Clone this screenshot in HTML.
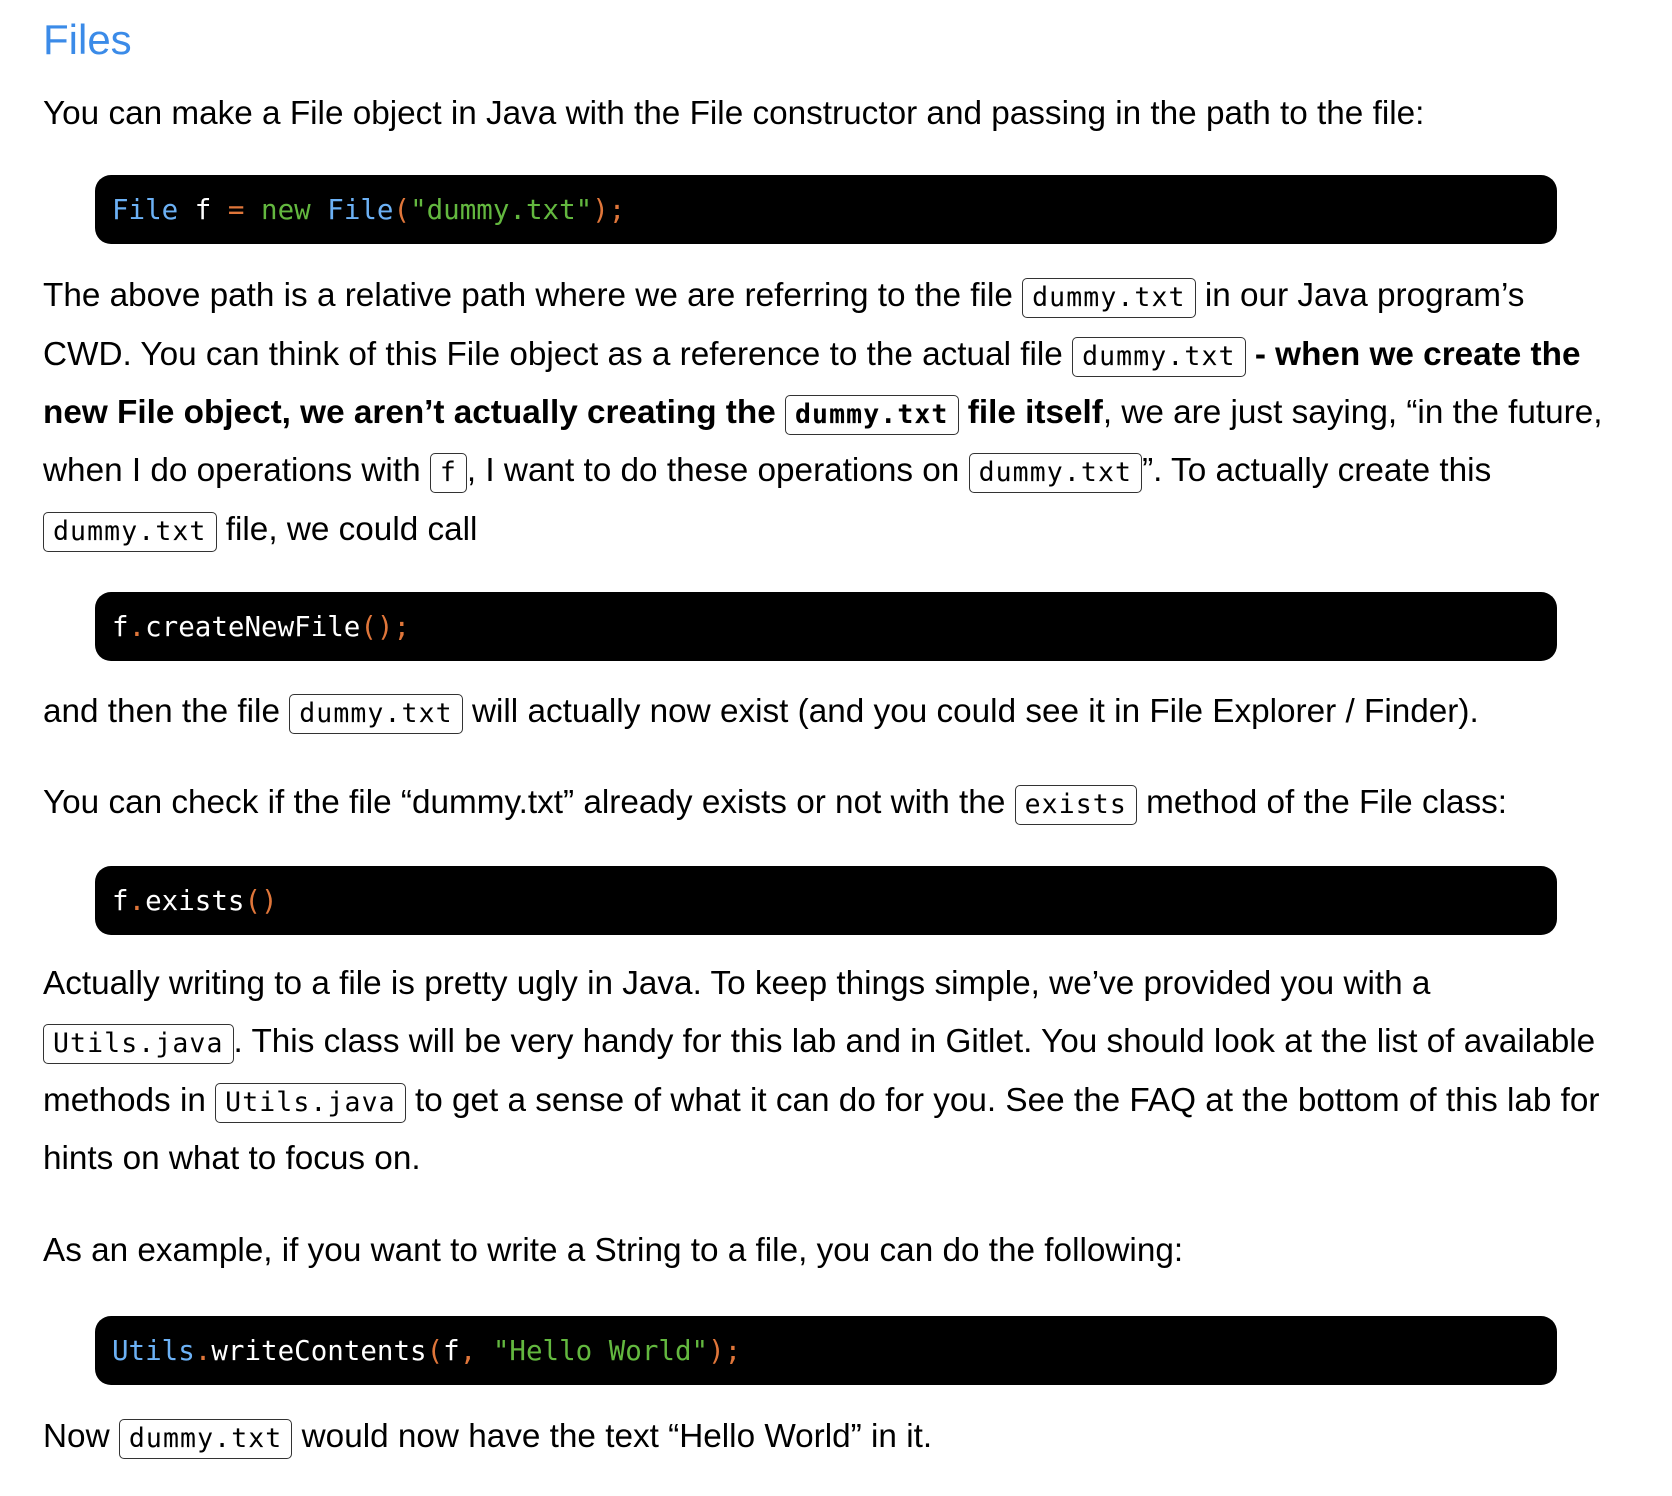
<!DOCTYPE html>
<html><head><meta charset="utf-8"><style>
html,body{margin:0;padding:0;background:#fff;width:1672px;height:1496px;overflow:hidden}
body{font-family:"Liberation Sans",Arial,sans-serif;color:#000;position:relative}
.l{position:absolute;left:43px;font-size:33.3px;line-height:59px;white-space:nowrap}
.h{position:absolute;left:43px;top:15px;font-size:42px;line-height:50px;color:#3b8be8}
code{font-family:"DejaVu Sans Mono","Liberation Mono",monospace;font-size:26.5px;border:1.5px solid #333;border-radius:5px;padding:3px 9px 4px;letter-spacing:1.1px}
b code{font-weight:bold}
.c{position:absolute;left:95px;width:1462px;height:69px;background:#000;border-radius:16px;font-family:"DejaVu Sans Mono","Liberation Mono",monospace;font-size:27.5px;line-height:71px;color:#fff;box-sizing:border-box;padding-left:17px;white-space:pre}
.b{color:#6cb1f5}.g{color:#63b83f}.o{color:#e0763a}
</style></head><body>
<div class="h">Files</div>
<div class="l" style="top:84px">You can make a File object in Java with the File constructor and passing in the path to the file:</div>
<div class="c" style="top:175px"><span class="b">File</span> f <span class="o">=</span> <span class="g">new</span> <span class="b">File</span><span class="o">(</span><span class="g">"dummy.txt"</span><span class="o">);</span></div>
<div class="l" style="top:266px">The above path is a relative path where we are referring to the file <code>dummy.txt</code> in our Java program’s</div>
<div class="l" style="top:325px">CWD. You can think of this File object as a reference to the actual file <code>dummy.txt</code> <b>- when we create the</b></div>
<div class="l" style="top:383px"><b>new File object, we aren’t actually creating the <code>dummy.txt</code> file itself</b>, we are just saying, “in the future,</div>
<div class="l" style="top:441px">when I do operations with <code>f</code>, I want to do these operations on <code>dummy.txt</code>”. To actually create this</div>
<div class="l" style="top:500px"><code>dummy.txt</code> file, we could call</div>
<div class="c" style="top:592px">f<span class="o">.</span>createNewFile<span class="o">();</span></div>
<div class="l" style="top:682px">and then the file <code>dummy.txt</code> will actually now exist (and you could see it in File Explorer / Finder).</div>
<div class="l" style="top:773px">You can check if the file “dummy.txt” already exists or not with the <code>exists</code> method of the File class:</div>
<div class="c" style="top:866px">f<span class="o">.</span>exists<span class="o">()</span></div>
<div class="l" style="top:954px">Actually writing to a file is pretty ugly in Java. To keep things simple, we’ve provided you with a</div>
<div class="l" style="top:1012px"><code>Utils.java</code>. This class will be very handy for this lab and in Gitlet. You should look at the list of available</div>
<div class="l" style="top:1071px">methods in <code>Utils.java</code> to get a sense of what it can do for you. See the FAQ at the bottom of this lab for</div>
<div class="l" style="top:1129px">hints on what to focus on.</div>
<div class="l" style="top:1221px">As an example, if you want to write a String to a file, you can do the following:</div>
<div class="c" style="top:1316px"><span class="b">Utils</span><span class="o">.</span>writeContents<span class="o">(</span>f<span class="o">,</span> <span class="g">"Hello World"</span><span class="o">);</span></div>
<div class="l" style="top:1407px">Now <code>dummy.txt</code> would now have the text “Hello World” in it.</div>
</body></html>
